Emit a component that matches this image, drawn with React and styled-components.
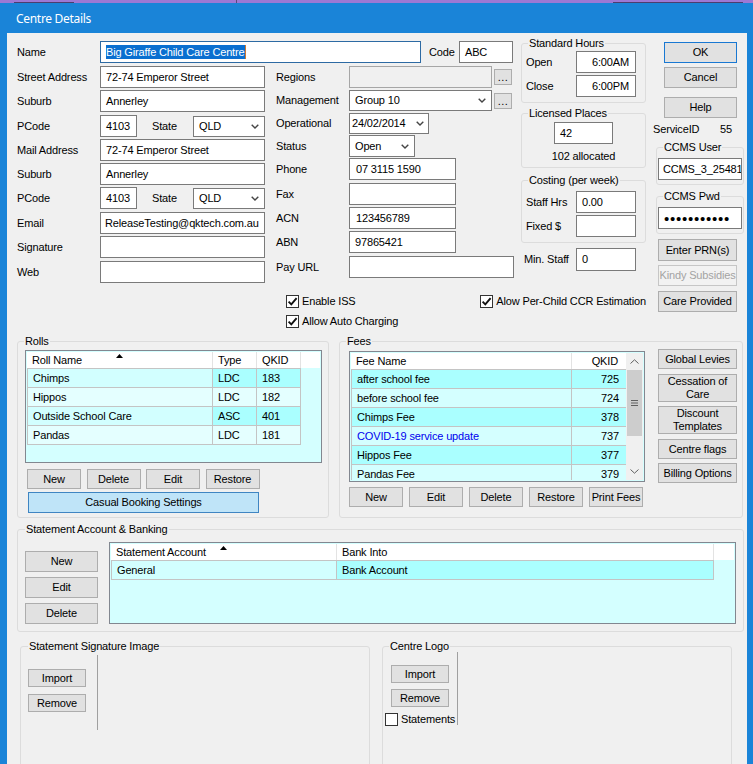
import React from "react";
import styled, { createGlobalStyle } from "styled-components";

const GlobalStyle = createGlobalStyle`
  * { box-sizing: border-box; }
  html, body { margin: 0; padding: 0; }
  body {
    width: 753px;
    height: 764px;
    overflow: hidden;
    background: #1a84d8;
    font-family: "Liberation Sans", Arial, sans-serif;
    font-size: 11px;
    letter-spacing: -0.15px;
    color: #000;
  }
`;

const TopStrip = styled.div`
  height: 3px;
  background: #9d78d4;
  overflow: hidden;
  display: flex;
  align-items: flex-end;
`;
const StripMark = styled.div`
  width: ${(p) => p.w}px;
  height: 1px;
  margin-left: ${(p) => p.ml}px;
  background: #4d3d6e;
`;
const StripSep = styled.div`
  width: 1px;
  height: 3px;
  background: #5a4a7a;
  margin-left: ${(p) => p.ml}px;
`;

const Window = styled.div`
  height: 761px;
  display: flex;
  flex-direction: column;
  background: #1a84d8;
`;
const TitleBar = styled.div`
  height: 30px;
  flex: none;
  display: flex;
  align-items: center;
  padding-left: 16px;
  color: #fff;
  font-family: "Noto Sans", "Open Sans", sans-serif;
  font-size: 12px;
  letter-spacing: -0.3px;
`;
const Client = styled.div`
  flex: 1;
  margin: 0 6px 0 7px;
  background: #f0f0f0;
  overflow: hidden;
`;

/* ---------- generic controls ---------- */
const Row = styled.div`
  display: flex;
  align-items: center;
  height: ${(p) => p.h || 22}px;
  margin-top: ${(p) => p.mt || 0}px;
  margin-left: ${(p) => p.ml || 0}px;
`;
const Label = styled.div`
  flex: none;
  width: ${(p) => p.w}px;
  margin-left: ${(p) => p.ml || 0}px;
  white-space: nowrap;
  line-height: 13px;
`;
const TextBox = styled.div`
  flex: none;
  width: ${(p) => p.w}px;
  height: ${(p) => p.h || 22}px;
  margin-top: ${(p) => p.mt || 0}px;
  margin-left: ${(p) => p.ml || 0}px;
  border: 1px solid ${(p) => (p.focus ? "#2d6aa3" : p.disabled ? "#a6a6a6" : "#7a7a7a")};
  background: ${(p) => (p.disabled ? "#f0f0f0" : "#fff")};
  padding: ${(p) => (p.right ? "0 6px 0 0" : `0 0 0 ${p.pl ?? 5}px`)};
  display: flex;
  align-items: center;
  justify-content: ${(p) => (p.right ? "flex-end" : "flex-start")};
  white-space: nowrap;
  overflow: hidden;
  line-height: 13px;
`;
const Selected = styled.span`
  background: #0a6fd0;
  color: #fff;
  line-height: 14px;
`;
const Caret = styled.span`
  display: inline-block;
  width: 1px;
  height: 14px;
  background: #d07a30;
`;
const Combo = styled(TextBox)`
  justify-content: space-between;
  padding-right: ${(p) => p.pr ?? 5}px;
`;
const Dots = styled.div`
  flex: none;
  width: 18px;
  height: 16px;
  margin-left: 2px;
  border: 1px solid #adadad;
  background: #e1e1e1;
  display: flex;
  align-items: flex-end;
  justify-content: center;
  line-height: 11px;
  padding-bottom: 1px;
  letter-spacing: 0.5px;
`;
const PwdDots = styled.span`
  font-size: 15px;
  letter-spacing: 0.75px;
  line-height: 13px;
`;

const Btn = styled.button`
  flex: none;
  width: ${(p) => p.w}px;
  height: ${(p) => p.h || 21}px;
  margin: ${(p) => p.mt || 0}px 0 0 ${(p) => p.ml || 0}px;
  padding: 0;
  font-family: inherit;
  font-size: 11px;
  letter-spacing: -0.15px;
  line-height: 13px;
  color: ${(p) => (p.disabled ? "#a3a3a3" : "#000")};
  background: ${(p) => (p.accent ? "#bfe4f8" : p.disabled ? "#f2f2f2" : "#e1e1e1")};
  border: 1px solid
    ${(p) => (p.primary ? "#1978d2" : p.accent ? "#3f85c2" : p.disabled ? "#c6c6c6" : "#adadad")};
  border-radius: 0;
  display: flex;
  flex-direction: column;
  align-items: center;
  justify-content: center;
  white-space: nowrap;
`;

const Group = styled.div`
  position: relative;
  flex: none;
  width: ${(p) => p.w}px;
  height: ${(p) => p.h}px;
  margin-top: ${(p) => p.mt || 0}px;
  margin-left: ${(p) => p.ml || 0}px;
  border: 1px solid #dcdcdc;
  border-radius: 3px;
`;
const GroupTitle = styled.span`
  position: absolute;
  top: -7px;
  left: ${(p) => p.left ?? 6}px;
  padding: 0 1px;
  background: #f0f0f0;
  line-height: 13px;
  white-space: nowrap;
`;

const CheckWrap = styled.div`
  display: flex;
  align-items: center;
  width: ${(p) => (p.w ? `${p.w}px` : "auto")};
  height: 13px;
  white-space: nowrap;
  line-height: 13px;
`;
const CheckBoxBox = styled.span`
  flex: none;
  width: 13px;
  height: 13px;
  border: 1px solid #333;
  background: #fff;
  margin-right: 3px;
  display: flex;
  align-items: center;
  justify-content: center;
`;
const Check = ({ checked, children, w }) => (
  <CheckWrap w={w}>
    <CheckBoxBox>
      {checked && (
        <svg width="11" height="11" viewBox="0 0 11 11">
          <path d="M1.6 5.6 L4.3 8.3 L9.6 2.2" fill="none" stroke="#111" strokeWidth="1.9" />
        </svg>
      )}
    </CheckBoxBox>
    {children}
  </CheckWrap>
);

const Chevron = () => (
  <svg width="8" height="5" viewBox="0 0 8 5">
    <polyline points="0.7,0.7 4,4 7.3,0.7" fill="none" stroke="#454545" strokeWidth="1.4" />
  </svg>
);

/* ---------- lists ---------- */
const ListBox = styled.div`
  flex: none;
  width: ${(p) => p.w}px;
  height: ${(p) => p.h}px;
  margin-top: ${(p) => p.mt || 0}px;
  margin-left: ${(p) => p.ml || 0}px;
  border: 1px solid #828790;
  padding: 1px;
  background: ${(p) => p.bg || "#d4ffff"};
  display: flex;
  overflow: hidden;
`;
const ListContent = styled.div`
  flex: 1;
  min-width: 0;
  display: flex;
  flex-direction: column;
  overflow: hidden;
`;
const HeaderRow = styled.div`
  flex: none;
  display: flex;
  height: 16px;
  background: #fff;
`;
const HeaderCell = styled.div`
  position: relative;
  flex: none;
  width: ${(p) => p.w}px;
  border-right: 1px solid #e3e3e3;
  padding: ${(p) => (p.right ? "0 8px 0 0" : "0 0 0 5px")};
  text-align: ${(p) => (p.right ? "right" : "left")};
  line-height: 17px;
  white-space: nowrap;
`;
const SortArrow = styled.span`
  position: absolute;
  top: 2px;
  left: ${(p) => p.left}px;
  display: flex;
`;
const Rows = styled.div`
  align-self: flex-start;
  display: flex;
  flex-direction: column;
  border-top: 1px solid #c4c4c4;
  border-left: 1px solid #c4c4c4;
`;
const DataRow = styled.div`
  display: flex;
`;
const Cell = styled.div`
  flex: none;
  width: ${(p) => p.w}px;
  height: 19px;
  background: ${(p) => p.bg};
  color: ${(p) => p.color || "#000"};
  border-right: 1px solid #c4c4c4;
  border-bottom: 1px solid #c4c4c4;
  padding: ${(p) => (p.right ? "0 7px 0 0" : "0 0 0 5px")};
  text-align: ${(p) => (p.right ? "right" : "left")};
  line-height: 18px;
  white-space: nowrap;
  overflow: hidden;
`;
const Scrollbar = styled.div`
  flex: none;
  width: 17px;
  background: #f0f0f0;
  display: flex;
  flex-direction: column;
`;
const ScrollBtn = styled.div`
  flex: none;
  height: 17px;
  display: flex;
  align-items: center;
  justify-content: center;
`;
const Thumb = styled.div`
  flex: none;
  height: 66px;
  margin: 0 1px;
  background: #cdcdcd;
  display: flex;
  align-items: center;
  justify-content: center;
`;
const Track = styled.div`
  flex: 1;
`;

const ArrowUp = () => (
  <svg width="7" height="4" viewBox="0 0 7 4">
    <path d="M0 4 L3.5 0 L7 4 Z" fill="#000" />
  </svg>
);

/* ---------- layout ---------- */
const TopSection = styled.div`
  display: flex;
  align-items: flex-start;
  padding-left: 10px;
`;
const LeftWrap = styled.div`
  flex: none;
  width: 629px;
  display: flex;
  flex-direction: column;
`;
const UpperRow = styled.div`
  display: flex;
  align-items: flex-start;
  gap: 8px;
`;
const FormBlock = styled.div`
  flex: none;
  width: 496px;
  margin-top: 8px;
`;
const FormColumns = styled.div`
  display: flex;
  gap: 11px;
  margin-top: 3px;
`;
const FormCol = styled.div`
  flex: none;
  width: ${(p) => p.w}px;
  display: flex;
  flex-direction: column;
`;
const SideCol = styled.div`
  flex: none;
  width: 125px;
  display: flex;
  flex-direction: column;
`;
const GroupBody = styled.div`
  display: flex;
  flex-direction: column;
  align-items: ${(p) => (p.center ? "center" : "stretch")};
  padding: ${(p) => p.pt || 0}px 0 0 ${(p) => p.pl || 0}px;
`;
const Allocated = styled.div`
  margin-top: 6px;
  line-height: 13px;
`;
const Checks = styled.div`
  margin-top: 12px;
  padding-left: 269px;
  display: flex;
  flex-direction: column;
  gap: 7px;
`;
const CheckLine = styled.div`
  display: flex;
`;
const ButtonCol = styled.div`
  flex: none;
  width: ${(p) => p.w}px;
  margin-left: ${(p) => p.ml || 0}px;
  margin-top: ${(p) => p.mt || 0}px;
  display: flex;
  flex-direction: column;
`;
const ServiceRow = styled.div`
  display: flex;
  margin-top: 4.5px;
  line-height: 13px;
`;

const MidSection = styled.div`
  display: flex;
  align-items: flex-start;
  padding-left: 10px;
  margin-top: 13px;
`;
const GroupInner = styled.div`
  display: flex;
  flex-direction: ${(p) => (p.column ? "column" : "row")};
  align-items: flex-start;
  padding: ${(p) => p.pt || 0}px 0 0 ${(p) => p.pl || 0}px;
`;
const BtnRow = styled.div`
  display: flex;
  gap: ${(p) => p.gap}px;
  margin-top: ${(p) => p.mt || 0}px;
  margin-left: ${(p) => p.ml || 0}px;
`;
const BottomRow = styled.div`
  display: flex;
  gap: 12px;
  padding-left: 13px;
  margin-top: 14px;
`;
const VLine = styled.div`
  flex: none;
  width: 1px;
  height: ${(p) => p.h}px;
  margin-left: ${(p) => p.ml || 0}px;
  background: #a0a0a0;
`;

const ODD_A = "#d2ffff";
const ODD_B = "#aaffff";
const EVEN = "#e4ffff";

const rolls = [
  ["Chimps", "LDC", "183"],
  ["Hippos", "LDC", "182"],
  ["Outside School Care", "ASC", "401"],
  ["Pandas", "LDC", "181"],
];
const fees = [
  ["after school fee", "725"],
  ["before school fee", "724"],
  ["Chimps Fee", "378"],
  ["COVID-19 service update", "737", "#0000ee"],
  ["Hippos Fee", "377"],
  ["Pandas Fee", "379"],
];

export default function App() {
  return (
    <>
      <GlobalStyle />
      <TopStrip>
        <StripMark w={60} ml={14} />
        <StripSep ml={162} />
        <StripMark w={130} ml={376} />
      </TopStrip>
      <Window>
        <TitleBar>Centre Details</TitleBar>
        <Client>
          <TopSection>
            <LeftWrap>
              <UpperRow>
                <FormBlock>
                  <Row>
                    <Label w={83}>Name</Label>
                    <TextBox w={321} focus>
                      <Selected>Big Giraffe Child Care Centre</Selected>
                      <Caret />
                    </TextBox>
                    <Label w={30} ml={8}>Code</Label>
                    <TextBox w={54}>ABC</TextBox>
                  </Row>
                  <FormColumns>
                    <FormCol w={248}>
                      <Row>
                        <Label w={83}>Street Address</Label>
                        <TextBox w={165}>72-74 Emperor Street</TextBox>
                      </Row>
                      <Row mt={2}>
                        <Label w={83}>Suburb</Label>
                        <TextBox w={165}>Annerley</TextBox>
                      </Row>
                      <Row mt={3}>
                        <Label w={83}>PCode</Label>
                        <TextBox w={37}>4103</TextBox>
                        <Label w={41} ml={15}>State</Label>
                        <Combo w={72} h={21}>QLD<Chevron /></Combo>
                      </Row>
                      <Row mt={2}>
                        <Label w={83}>Mail Address</Label>
                        <TextBox w={165}>72-74 Emperor Street</TextBox>
                      </Row>
                      <Row mt={2}>
                        <Label w={83}>Suburb</Label>
                        <TextBox w={165}>Annerley</TextBox>
                      </Row>
                      <Row mt={2}>
                        <Label w={83}>PCode</Label>
                        <TextBox w={37}>4103</TextBox>
                        <Label w={41} ml={15}>State</Label>
                        <Combo w={72} h={21}>QLD<Chevron /></Combo>
                      </Row>
                      <Row mt={3}>
                        <Label w={83}>Email</Label>
                        <TextBox w={165} pl={4}>ReleaseTesting@qktech.com.au</TextBox>
                      </Row>
                      <Row mt={2}>
                        <Label w={83}>Signature</Label>
                        <TextBox w={165} />
                      </Row>
                      <Row mt={3}>
                        <Label w={83}>Web</Label>
                        <TextBox w={165} />
                      </Row>
                    </FormCol>
                    <FormCol w={237}>
                      <Row>
                        <Label w={73}>Regions</Label>
                        <TextBox w={143} disabled />
                        <Dots>...</Dots>
                      </Row>
                      <Row mt={2} h={21}>
                        <Label w={73}>Management</Label>
                        <Combo w={143} h={21}>Group 10<Chevron /></Combo>
                        <Dots>...</Dots>
                      </Row>
                      <Row mt={2} h={21}>
                        <Label w={73}>Operational</Label>
                        <Combo w={80} h={21} pl={2} pr={4}>24/02/2014<Chevron /></Combo>
                      </Row>
                      <Row mt={1}>
                        <Label w={73}>Status</Label>
                        <Combo w={66}>Open<Chevron /></Combo>
                      </Row>
                      <Row mt={1}>
                        <Label w={73}>Phone</Label>
                        <TextBox w={107} pl={6}>07 3115 1590</TextBox>
                      </Row>
                      <Row mt={3}>
                        <Label w={73}>Fax</Label>
                        <TextBox w={107} />
                      </Row>
                      <Row mt={2}>
                        <Label w={73}>ACN</Label>
                        <TextBox w={107} pl={6}>123456789</TextBox>
                      </Row>
                      <Row mt={2}>
                        <Label w={73}>ABN</Label>
                        <TextBox w={107}>97865421</TextBox>
                      </Row>
                      <Row mt={3}>
                        <Label w={73}>Pay URL</Label>
                        <TextBox w={165} />
                      </Row>
                    </FormCol>
                  </FormColumns>
                </FormBlock>

                <SideCol>
                  <Group w={125} h={60} mt={10}>
                    <GroupTitle>Standard Hours</GroupTitle>
                    <GroupBody pt={7} pl={4}>
                      <Row>
                        <Label w={50}>Open</Label>
                        <TextBox w={60} right>6:00AM</TextBox>
                      </Row>
                      <Row mt={2}>
                        <Label w={50}>Close</Label>
                        <TextBox w={60} right>6:00PM</TextBox>
                      </Row>
                    </GroupBody>
                  </Group>
                  <Group w={125} h={55} mt={10}>
                    <GroupTitle>Licensed Places</GroupTitle>
                    <GroupBody pt={8} center>
                      <TextBox w={59}>42</TextBox>
                      <Allocated>102 allocated</Allocated>
                    </GroupBody>
                  </Group>
                  <Group w={125} h={63} mt={12}>
                    <GroupTitle>Costing (per week)</GroupTitle>
                    <GroupBody pt={10} pl={4}>
                      <Row>
                        <Label w={50}>Staff Hrs</Label>
                        <TextBox w={60}>0.00</TextBox>
                      </Row>
                      <Row mt={2}>
                        <Label w={50}>Fixed $</Label>
                        <TextBox w={60} />
                      </Row>
                    </GroupBody>
                  </Group>
                  <Row mt={5} ml={3} h={23}>
                    <Label w={52}>Min. Staff</Label>
                    <TextBox w={60} h={23}>0</TextBox>
                  </Row>
                </SideCol>
              </UpperRow>

              <Checks>
                <CheckLine>
                  <Check checked w={200}>Enable ISS</Check>
                  <Check checked>Alow Per-Child CCR Estimation</Check>
                </CheckLine>
                <CheckLine>
                  <Check checked>Allow Auto Charging</Check>
                </CheckLine>
              </Checks>
            </LeftWrap>

            <ButtonCol w={91} ml={7}>
              <Btn w={73} ml={11} mt={9} primary>OK</Btn>
              <Btn w={73} ml={11} mt={4}>Cancel</Btn>
              <Btn w={73} ml={11} mt={9}>Help</Btn>
              <ServiceRow>
                <Label w={67}>ServiceID</Label>
                <span>55</span>
              </ServiceRow>
              <Group w={88} h={38} mt={11.5} ml={3}>
                <GroupTitle>CCMS User</GroupTitle>
                <TextBox w={84} mt={10} ml={1} pl={4}>CCMS_3_25481</TextBox>
              </Group>
              <Group w={88} h={38} mt={11} ml={3}>
                <GroupTitle>CCMS Pwd</GroupTitle>
                <TextBox w={84} mt={10} ml={1}>
                  <PwdDots>•••••••••••</PwdDots>
                </TextBox>
              </Group>
              <Btn w={79} h={22} ml={5} mt={5}>Enter PRN(s)</Btn>
              <Btn w={79} ml={5} mt={4} disabled>Kindy Subsidies</Btn>
              <Btn w={79} ml={5} mt={5}>Care Provided</Btn>
            </ButtonCol>
          </TopSection>

          <MidSection>
            <Group w={312} h={177}>
              <GroupTitle>Rolls</GroupTitle>
              <GroupInner column pt={8} pl={7}>
                <ListBox w={297} h={113}>
                  <ListContent>
                    <HeaderRow>
                      <HeaderCell w={186}>
                        Roll Name
                        <SortArrow left={89}><ArrowUp /></SortArrow>
                      </HeaderCell>
                      <HeaderCell w={44}>Type</HeaderCell>
                      <HeaderCell w={44}>QKID</HeaderCell>
                    </HeaderRow>
                    <Rows>
                      {rolls.map((r, i) => {
                        const odd = i % 2 === 0;
                        return (
                          <DataRow key={r[0]}>
                            <Cell w={185} bg={odd ? ODD_A : EVEN}>{r[0]}</Cell>
                            <Cell w={44} bg={odd ? ODD_B : EVEN}>{r[1]}</Cell>
                            <Cell w={44} bg={odd ? ODD_B : EVEN}>{r[2]}</Cell>
                          </DataRow>
                        );
                      })}
                    </Rows>
                  </ListContent>
                </ListBox>
                <BtnRow gap={5.5} mt={6} ml={2}>
                  <Btn w={54} h={20}>New</Btn>
                  <Btn w={54} h={20}>Delete</Btn>
                  <Btn w={54} h={20}>Edit</Btn>
                  <Btn w={54} h={20}>Restore</Btn>
                </BtnRow>
                <Btn w={231} ml={3} mt={3} accent>Casual Booking Settings</Btn>
              </GroupInner>
            </Group>

            <Group w={404} h={177} ml={10}>
              <GroupTitle>Fees</GroupTitle>
              <GroupInner pl={9}>
                <ButtonCol w={296} mt={9}>
                  <ListBox w={296} h={131}>
                    <ListContent>
                      <HeaderRow>
                        <HeaderCell w={221}>Fee Name</HeaderCell>
                        <HeaderCell w={55} right>QKID</HeaderCell>
                      </HeaderRow>
                      <Rows>
                        {fees.map((f, i) => (
                          <DataRow key={f[0]}>
                            <Cell w={220} bg={i % 2 === 0 ? ODD_B : "#d4ffff"} color={f[2]}>{f[0]}</Cell>
                            <Cell w={55} right bg={i % 2 === 0 ? ODD_B : "#d4ffff"}>{f[1]}</Cell>
                          </DataRow>
                        ))}
                      </Rows>
                    </ListContent>
                    <Scrollbar>
                      <ScrollBtn>
                        <svg width="9" height="5" viewBox="0 0 9 5">
                          <polyline points="0.5,4.5 4.5,0.8 8.5,4.5" fill="none" stroke="#606060" strokeWidth="1" />
                        </svg>
                      </ScrollBtn>
                      <Thumb>
                        <svg width="7" height="6" viewBox="0 0 7 6">
                          <path d="M0 0.5 H7 M0 3 H7 M0 5.5 H7" stroke="#606060" strokeWidth="1" />
                        </svg>
                      </Thumb>
                      <Track />
                      <ScrollBtn>
                        <svg width="9" height="5" viewBox="0 0 9 5">
                          <polyline points="0.5,0.5 4.5,4.2 8.5,0.5" fill="none" stroke="#606060" strokeWidth="1" />
                        </svg>
                      </ScrollBtn>
                    </Scrollbar>
                  </ListBox>
                  <BtnRow gap={6} mt={5}>
                    <Btn w={54} h={20}>New</Btn>
                    <Btn w={54} h={20}>Edit</Btn>
                    <Btn w={54} h={20}>Delete</Btn>
                    <Btn w={54} h={20}>Restore</Btn>
                    <Btn w={54} h={20}>Print Fees</Btn>
                  </BtnRow>
                </ButtonCol>
                <ButtonCol w={79} ml={13} mt={7}>
                  <Btn w={79} h={20}>Global Levies</Btn>
                  <Btn w={79} h={28} mt={5}><span>Cessation of</span><span>Care</span></Btn>
                  <Btn w={79} h={28} mt={4}><span>Discount</span><span>Templates</span></Btn>
                  <Btn w={79} h={20} mt={5}>Centre flags</Btn>
                  <Btn w={79} h={20} mt={4}>Billing Options</Btn>
                </ButtonCol>
              </GroupInner>
            </Group>
          </MidSection>

          <Group w={727} h={103} mt={11} ml={10}>
            <GroupTitle left={7}>Statement Account &amp; Banking</GroupTitle>
            <GroupInner>
              <ButtonCol w={73} ml={7} mt={21}>
                <Btn w={73}>New</Btn>
                <Btn w={73} mt={5}>Edit</Btn>
                <Btn w={73} mt={5}>Delete</Btn>
              </ButtonCol>
              <ListBox w={627} h={82} ml={11} mt={12}>
                <ListContent>
                  <HeaderRow>
                    <HeaderCell w={226}>
                      Statement Account
                      <SortArrow left={109}><ArrowUp /></SortArrow>
                    </HeaderCell>
                    <HeaderCell w={377}>Bank Into</HeaderCell>
                  </HeaderRow>
                  <Rows>
                    <DataRow>
                      <Cell w={225} bg={ODD_A}>General</Cell>
                      <Cell w={377} bg={ODD_B}>Bank Account</Cell>
                    </DataRow>
                  </Rows>
                </ListContent>
              </ListBox>
            </GroupInner>
          </Group>

          <BottomRow>
            <Group w={350} h={140}>
              <GroupTitle left={7}>Statement Signature Image</GroupTitle>
              <GroupInner pt={8}>
                <ButtonCol w={58} ml={7} mt={14}>
                  <Btn w={58} h={18}>Import</Btn>
                  <Btn w={58} h={18} mt={7}>Remove</Btn>
                </ButtonCol>
                <VLine h={75} ml={11} />
              </GroupInner>
            </Group>
            <Group w={350} h={140}>
              <GroupTitle>Centre Logo</GroupTitle>
              <GroupInner pt={5}>
                <ButtonCol w={72} ml={2} mt={13}>
                  <Btn w={58} h={18} ml={6}>Import</Btn>
                  <Btn w={58} h={18} ml={6} mt={6}>Remove</Btn>
                  <Row h={13} mt={6}>
                    <Check>Statements</Check>
                  </Row>
                </ButtonCol>
                <VLine h={73} />
              </GroupInner>
            </Group>
          </BottomRow>
        </Client>
      </Window>
    </>
  );
}
